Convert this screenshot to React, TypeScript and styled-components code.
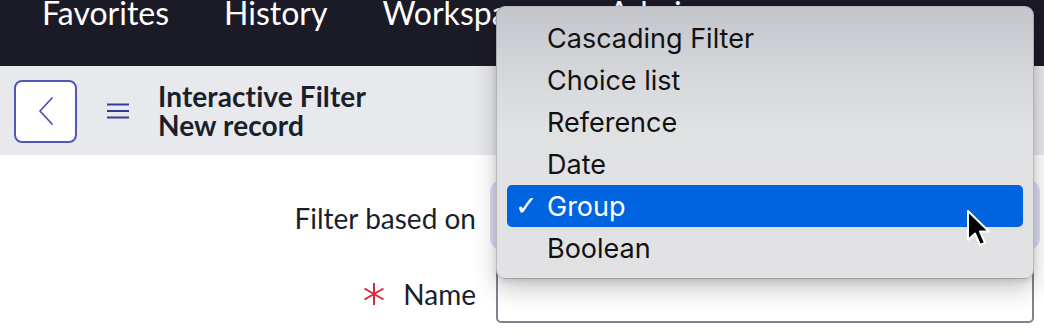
import React from "react";
import styled, { createGlobalStyle } from "styled-components";

const GlobalStyle = createGlobalStyle`
  html, body { margin: 0; padding: 0; background: #ffffff; }
  body { font-family: Lato, "Noto Sans", sans-serif; overflow: hidden; }
  * { box-sizing: border-box; }
`;

const Page = styled.div`
  position: relative;
  width: 1044px;
  height: 332px;
  overflow: hidden;
  background: #ffffff;
`;

const TopNav = styled.nav`
  height: 66px;
  background: #1b1a27;
  display: flex;
  align-items: flex-start;
  padding-left: 42px;
  gap: 55px;
`;

const NavItem = styled.span`
  color: #ffffff;
  font-family: Lato, sans-serif;
  font-size: 32px;
  line-height: 30px;
  margin-top: -2px;
  white-space: nowrap;
`;

const SubHeader = styled.header`
  height: 89px;
  background: #e8e9ec;
  display: flex;
  align-items: center;
  padding-left: 14px;
`;

const BackButton = styled.button`
  width: 63px;
  height: 63px;
  border: 2px solid #5157b9;
  border-radius: 8px;
  background: #ffffff;
  display: flex;
  align-items: center;
  justify-content: center;
  padding: 0;
  margin-top: 1px;
`;

const MenuIcon = styled.span`
  display: flex;
  margin-left: 30px;
  margin-right: 29px;
`;

const TitleBlock = styled.div`
  display: flex;
  flex-direction: column;
  color: #1b1f2b;
  font-family: Lato, sans-serif;
  font-weight: 700;
  font-size: 28px;
  letter-spacing: 0.1px;
  line-height: 29px;
`;

const Form = styled.div`
  display: grid;
  grid-template-columns: 476px 538px;
  column-gap: 20px;
  row-gap: 21px;
  padding-top: 31px;
  align-items: center;
`;

const Label = styled.label<{ $shift?: number }>`
  justify-self: end;
  display: flex;
  align-items: center;
  gap: 17px;
  color: #1b1f2b;
  font-family: Lato, sans-serif;
  font-size: 28px;
  line-height: 32px;
  margin-top: ${(p) => p.$shift ?? 0}px;
`;

const Required = styled.span`
  display: flex;
`;

const SelectBox = styled.div`
  height: 58px;
  border: 2px solid #3a4fd0;
  border-radius: 6px;
  background: #ffffff;
  box-shadow: 0 0 0 6px #dcdcf1;
`;

const InputBox = styled.div`
  height: 58px;
  border: 2px solid #80838f;
  border-radius: 5px;
  background: #ffffff;
`;

const Dropdown = styled.ul`
  position: absolute;
  left: 496px;
  top: 6px;
  width: 538px;
  margin: 0;
  padding: 10px 10px 9px;
  list-style: none;
  border-radius: 9px;
  background: linear-gradient(180deg, #c4c5cb 0%, #d6d7db 25%, #e0e1e3 45%, #e2e2e4 100%);
  border: 1px solid rgba(0, 0, 0, 0.18);
  box-shadow: 0 10px 24px rgba(0, 0, 0, 0.22), 0 2px 6px rgba(0, 0, 0, 0.12);
`;

const Item = styled.li<{ $active?: boolean }>`
  position: relative;
  height: 42px;
  display: flex;
  align-items: center;
  padding-left: 40px;
  border-radius: 5px;
  font-family: Inter, "Liberation Sans", Arial, sans-serif;
  font-size: 27px;
  color: ${(p) => (p.$active ? "#ffffff" : "#111111")};
  background: ${(p) => (p.$active ? "#0064e1" : "transparent")};
`;

const Check = styled.span`
  position: absolute;
  left: 8px;
  top: 50%;
  transform: translateY(-52%);
  font-family: "DejaVu Sans", sans-serif;
  font-size: 27px;
  line-height: 1;
`;

const Cursor = styled.svg`
  position: absolute;
  left: 965px;
  top: 209px;
`;

const items = ["Cascading Filter", "Choice list", "Reference", "Date", "Group", "Boolean"];

export default function App() {
  return (
    <Page>
      <GlobalStyle />
      <TopNav>
        <NavItem>Favorites</NavItem>
        <NavItem>History</NavItem>
        <NavItem>Workspaces</NavItem>
        <NavItem>Admin</NavItem>
      </TopNav>
      <SubHeader>
        <BackButton aria-label="Back">
          <svg width="16" height="30" viewBox="0 0 16 30" fill="none">
            <path d="M14 2 L2 15 L14 28" stroke="#4e53b6" strokeWidth="1.8" strokeLinecap="round" strokeLinejoin="round" />
          </svg>
        </BackButton>
        <MenuIcon>
          <svg width="22" height="16" viewBox="0 0 22 16" fill="none">
            <path d="M0 1.5 H22 M0 8 H22 M0 14.5 H22" stroke="#363a96" strokeWidth="2" />
          </svg>
        </MenuIcon>
        <TitleBlock>
          <span>Interactive Filter</span>
          <span>New record</span>
        </TitleBlock>
      </SubHeader>
      <Form>
        <Label $shift={6}>Filter based on</Label>
        <SelectBox />
        <Label>
          <Required>
            <svg width="24" height="24" viewBox="0 0 24 24" fill="none">
              <path d="M12 1 V23 M2.5 6.5 L21.5 17.5 M21.5 6.5 L2.5 17.5" stroke="#e0233b" strokeWidth="2" />
            </svg>
          </Required>
          Name
        </Label>
        <InputBox />
      </Form>
      <Dropdown role="listbox">
        {items.map((t) => (
          <Item key={t} $active={t === "Group"}>
            {t === "Group" && <Check>✓</Check>}
            {t}
          </Item>
        ))}
      </Dropdown>
      <Cursor width="28" height="42" viewBox="0 0 28 42">
        <path d="M3 2 L3 31 L10 24.5 L15 36 L20 33.8 L15 22.5 L24 22.5 Z" fill="#000" stroke="#fff" strokeWidth="2" strokeLinejoin="round" />
      </Cursor>
    </Page>
  );
}
